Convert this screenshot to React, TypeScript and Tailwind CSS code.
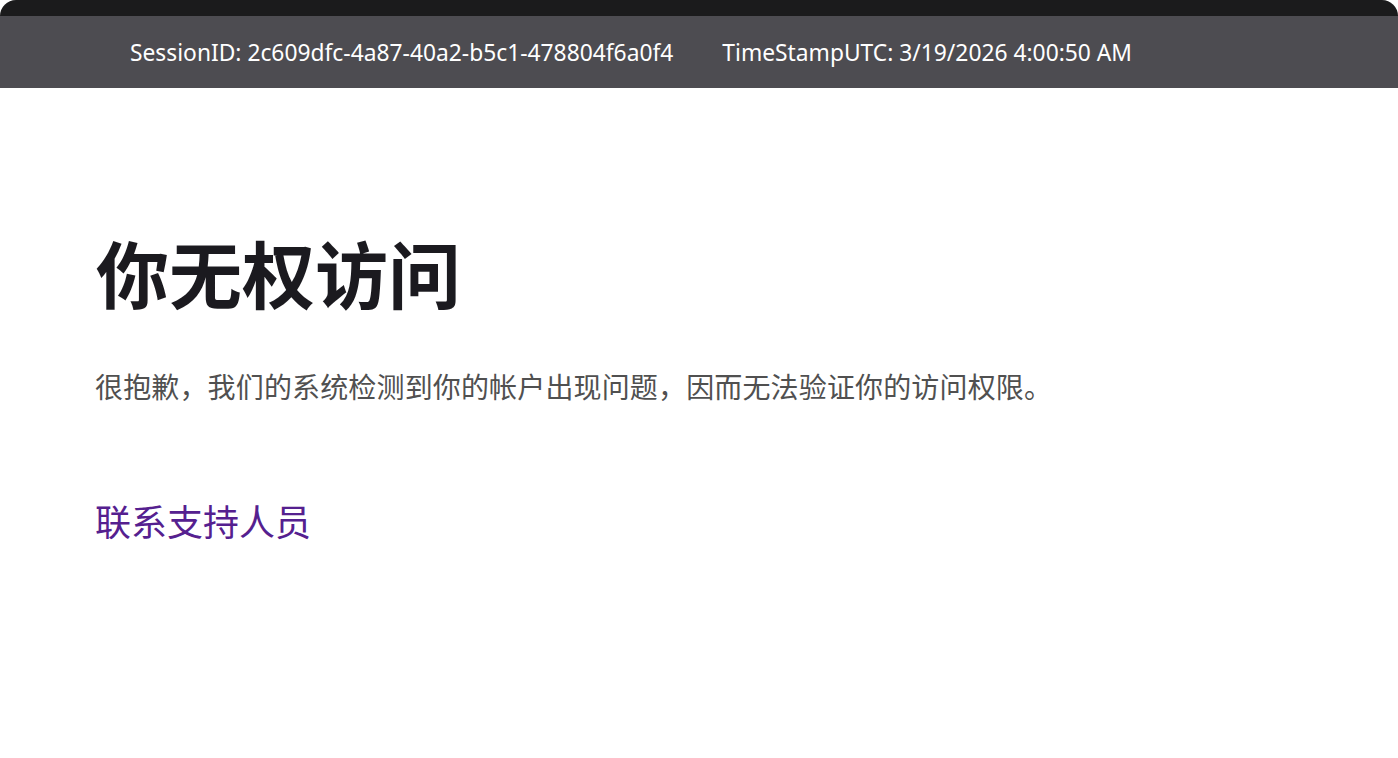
import React from "react";

export default function App() {
  return (
    <div className="w-[1398px] h-[758px] bg-white overflow-hidden">
      <div className="rounded-t-[16px] bg-[#1b1b1c] pt-[16px]">
        <div
          className="h-[72px] bg-[#4d4c51] flex items-center pl-[130px] pt-[2px] gap-[49px] text-white text-[22.8px]"
          style={{ fontFamily: '"Noto Sans", "Open Sans", sans-serif' }}
        >
          <span>SessionID: 2c609dfc-4a87-40a2-b5c1-478804f6a0f4</span>
          <span>TimeStampUTC: 3/19/2026 4:00:50 AM</span>
        </div>
      </div>
      <main
        className="pl-[95px] pt-[140px]"
        style={{ fontFamily: '"Noto Sans CJK SC", "Noto Sans", sans-serif' }}
      >
        <h1 className="text-[73px] font-bold leading-[1.2] text-[#1b1a1f] ml-[1px]">
          你无权访问
        </h1>
        <p className="mt-[51px] text-[28px] leading-[1.4] text-[#505050] tracking-[0.15px]">
          很抱歉，我们的系统检测到你的帐户出现问题，因而无法验证你的访问权限。
        </p>
        <a href="#" className="block mt-[89px] text-[36px] leading-[1.4] text-[#55208f] w-fit">
          联系支持人员
        </a>
      </main>
    </div>
  );
}
